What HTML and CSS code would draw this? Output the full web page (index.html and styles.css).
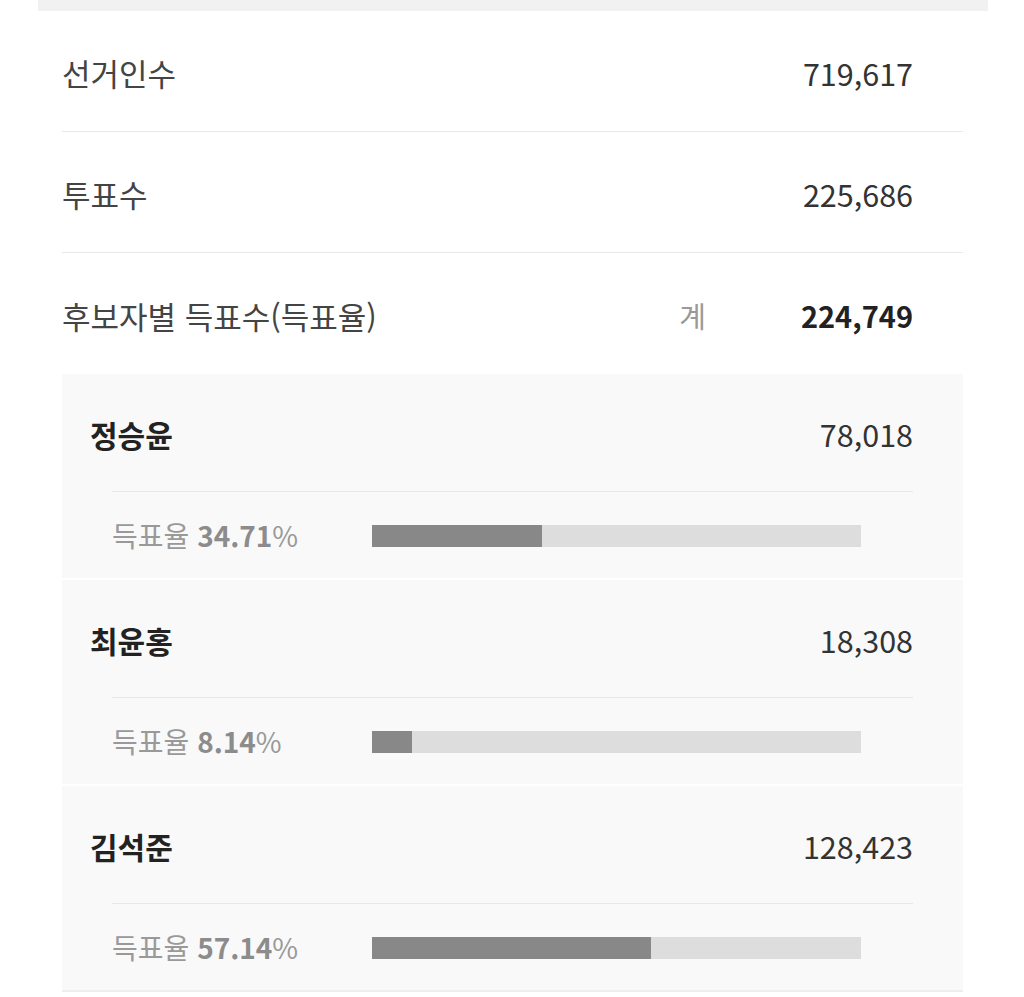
FILE: index.html
```html
<!DOCTYPE html>
<html lang="ko">
<head>
<meta charset="utf-8">
<link rel="stylesheet" href="styles.css">
</head>
<body>
<div class="topbar"></div>
<div class="list">
  <div class="row"><span class="label">선거인수</span><span class="num">719,617</span></div>
  <div class="row"><span class="label">투표수</span><span class="num">225,686</span></div>
  <div class="row last"><span class="label">후보자별 득표수(득표율)</span><span class="total"><span class="gye">계</span><span class="num bold">224,749</span></span></div>
  <div class="cands">
    <div class="cand">
      <div class="cand-head"><span class="name">정승윤</span><span class="num">78,018</span></div>
      <div class="cand-rate"><span class="rate">득표율 <b>34.71</b>%</span><div class="bar"><div class="fill" style="width:34.71%"></div></div></div>
    </div>
    <div class="cand">
      <div class="cand-head"><span class="name">최윤홍</span><span class="num">18,308</span></div>
      <div class="cand-rate"><span class="rate">득표율 <b>8.14</b>%</span><div class="bar"><div class="fill" style="width:8.14%"></div></div></div>
    </div>
    <div class="cand">
      <div class="cand-head"><span class="name">김석준</span><span class="num">128,423</span></div>
      <div class="cand-rate"><span class="rate">득표율 <b>57.14</b>%</span><div class="bar"><div class="fill" style="width:57.14%"></div></div></div>
    </div>
  </div>
</div>
</body>
</html>
```
FILE: styles.css
```css
html, body {
  margin: 0;
  padding: 0;
  background: #fff;
  font-family: "Noto Sans CJK KR", "Noto Sans", sans-serif;
  color: #333;
}
.topbar {
  margin: 0 36px 0 38px;
  height: 11px;
  background: #f1f1f1;
}
.list {
  margin: 0 61px 0 62px;
  border-bottom: 2px solid #eeeeee;
}
.row {
  height: 120px;
  display: flex;
  align-items: center;
  justify-content: space-between;
  padding-right: 50px;
  border-bottom: 1px solid #e8e8e8;
  font-size: 31px;
}
.row.last {
  border-bottom: none;
  height: 121px;
}
.label {
  color: #444;
  padding-top: 3px;
}
.num {
  color: #333;
  font-size: 30.5px;
  padding-top: 3px;
}
.num.bold {
  font-weight: 700;
  font-size: 29px;
  color: #222;
}
.total {
  display: flex;
  align-items: center;
}
.gye {
  color: #999;
  font-size: 29px;
  margin-right: 95px;
  padding-top: 3px;
}
.cands {
  background: #f9f9f9;
}
.cand {
  border-bottom: 2px solid #fff;
}
.cand:last-child {
  border-bottom: none;
}
.cand-head {
  height: 117px;
  display: flex;
  align-items: center;
  justify-content: space-between;
  padding: 0 50px 0 28px;
}
.name {
  font-size: 30px;
  font-weight: 700;
  color: #222;
  padding-top: 3px;
}
.cand-head .num {
  padding-top: 3px;
}
.cand-rate {
  margin: 0 50px;
  border-top: 1px solid #e8e8e8;
  height: 86px;
  display: flex;
  align-items: center;
}
.rate {
  width: 260px;
  font-size: 28px;
  color: #999;
}
.rate b {
  font-weight: 700;
  color: #8c8c8c;
}
.bar {
  width: 489px;
  height: 22px;
  background: #dddddd;
  margin-top: 2px;
}
.fill {
  height: 100%;
  background: #888888;
}
```
